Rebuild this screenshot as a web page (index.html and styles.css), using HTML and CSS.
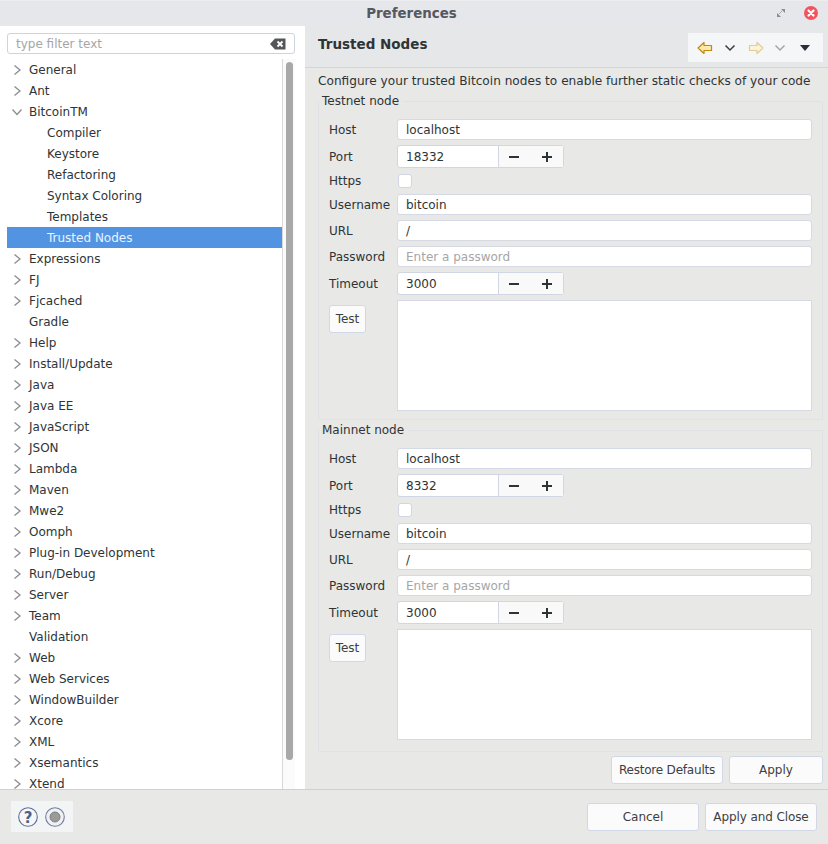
FILE: index.html
```html
<!DOCTYPE html>
<html lang="en">
<head>
<meta charset="utf-8">
<title>Preferences</title>
<link rel="stylesheet" href="styles.css">
</head>
<body>
<div class="window">
  <header class="titlebar">
    <span class="title">Preferences</span>
    <span class="wm-restore">
      <svg width="8" height="8" viewBox="0 0 8 8"><path d="M4 0h4v4z M0 4l4 4H0z" fill="#8c8c90"/><path d="M5 2L2 5" stroke="#a8a8ac"/></svg>
    </span>
    <span class="wm-close">
      <svg width="14" height="14" viewBox="0 0 14 14"><path d="M4.500 4.500l5 5M9.500 4.500l-5 5" stroke="#fff" stroke-width="2.200" stroke-linecap="round"/></svg>
    </span>
  </header>
  <div class="main">
    <aside class="left">
      <div class="filter">
        <span class="filter-ph">type filter text</span>
        <svg class="filter-clear" width="16" height="12" viewBox="0 0 16 12"><path d="M0 6l5-5.500h10.500v11H5z" fill="#55565a"/><path d="M7.500 3.500l5 5M12.500 3.500l-5 5" stroke="#fff" stroke-width="1.800"/></svg>
      </div>
      <div class="tree-wrap">
        <ul class="tree" id="tree">
          <li class="row"><svg class="chev" viewBox="0 0 10 10"><path d="M2.500 .5l5.500 4.500-5.500 4.500"/></svg>General</li>
          <li class="row"><svg class="chev" viewBox="0 0 10 10"><path d="M2.500 .5l5.500 4.500-5.500 4.500"/></svg>Ant</li>
          <li class="row"><svg class="chev" viewBox="0 0 10 10"><path d="M.5 2.500l4.500 5 4.500-5"/></svg>BitcoinTM</li>
          <li class="row child">Compiler</li>
          <li class="row child">Keystore</li>
          <li class="row child">Refactoring</li>
          <li class="row child">Syntax Coloring</li>
          <li class="row child">Templates</li>
          <li class="row child selected">Trusted Nodes</li>
          <li class="row"><svg class="chev" viewBox="0 0 10 10"><path d="M2.500 .5l5.500 4.500-5.500 4.500"/></svg>Expressions</li>
          <li class="row"><svg class="chev" viewBox="0 0 10 10"><path d="M2.500 .5l5.500 4.500-5.500 4.500"/></svg>FJ</li>
          <li class="row"><svg class="chev" viewBox="0 0 10 10"><path d="M2.500 .5l5.500 4.500-5.500 4.500"/></svg>Fjcached</li>
          <li class="row leaf">Gradle</li>
          <li class="row"><svg class="chev" viewBox="0 0 10 10"><path d="M2.500 .5l5.500 4.500-5.500 4.500"/></svg>Help</li>
          <li class="row"><svg class="chev" viewBox="0 0 10 10"><path d="M2.500 .5l5.500 4.500-5.500 4.500"/></svg>Install/Update</li>
          <li class="row"><svg class="chev" viewBox="0 0 10 10"><path d="M2.500 .5l5.500 4.500-5.500 4.500"/></svg>Java</li>
          <li class="row"><svg class="chev" viewBox="0 0 10 10"><path d="M2.500 .5l5.500 4.500-5.500 4.500"/></svg>Java EE</li>
          <li class="row"><svg class="chev" viewBox="0 0 10 10"><path d="M2.500 .5l5.500 4.500-5.500 4.500"/></svg>JavaScript</li>
          <li class="row"><svg class="chev" viewBox="0 0 10 10"><path d="M2.500 .5l5.500 4.500-5.500 4.500"/></svg>JSON</li>
          <li class="row"><svg class="chev" viewBox="0 0 10 10"><path d="M2.500 .5l5.500 4.500-5.500 4.500"/></svg>Lambda</li>
          <li class="row"><svg class="chev" viewBox="0 0 10 10"><path d="M2.500 .5l5.500 4.500-5.500 4.500"/></svg>Maven</li>
          <li class="row"><svg class="chev" viewBox="0 0 10 10"><path d="M2.500 .5l5.500 4.500-5.500 4.500"/></svg>Mwe2</li>
          <li class="row"><svg class="chev" viewBox="0 0 10 10"><path d="M2.500 .5l5.500 4.500-5.500 4.500"/></svg>Oomph</li>
          <li class="row"><svg class="chev" viewBox="0 0 10 10"><path d="M2.500 .5l5.500 4.500-5.500 4.500"/></svg>Plug-in Development</li>
          <li class="row"><svg class="chev" viewBox="0 0 10 10"><path d="M2.500 .5l5.500 4.500-5.500 4.500"/></svg>Run/Debug</li>
          <li class="row"><svg class="chev" viewBox="0 0 10 10"><path d="M2.500 .5l5.500 4.500-5.500 4.500"/></svg>Server</li>
          <li class="row"><svg class="chev" viewBox="0 0 10 10"><path d="M2.500 .5l5.500 4.500-5.500 4.500"/></svg>Team</li>
          <li class="row leaf">Validation</li>
          <li class="row"><svg class="chev" viewBox="0 0 10 10"><path d="M2.500 .5l5.500 4.500-5.500 4.500"/></svg>Web</li>
          <li class="row"><svg class="chev" viewBox="0 0 10 10"><path d="M2.500 .5l5.500 4.500-5.500 4.500"/></svg>Web Services</li>
          <li class="row"><svg class="chev" viewBox="0 0 10 10"><path d="M2.500 .5l5.500 4.500-5.500 4.500"/></svg>WindowBuilder</li>
          <li class="row"><svg class="chev" viewBox="0 0 10 10"><path d="M2.500 .5l5.500 4.500-5.500 4.500"/></svg>Xcore</li>
          <li class="row"><svg class="chev" viewBox="0 0 10 10"><path d="M2.500 .5l5.500 4.500-5.500 4.500"/></svg>XML</li>
          <li class="row"><svg class="chev" viewBox="0 0 10 10"><path d="M2.500 .5l5.500 4.500-5.500 4.500"/></svg>Xsemantics</li>
          <li class="row"><svg class="chev" viewBox="0 0 10 10"><path d="M2.500 .5l5.500 4.500-5.500 4.500"/></svg>Xtend</li>
        </ul>
        <div class="scroll"><div class="thumb"></div></div>
      </div>
    </aside>
    <section class="right">
      <div class="page-head">
        <h1 class="page-title">Trusted Nodes</h1>
        <div class="toolbar">
          <svg class="tb-arrow" width="16" height="14" viewBox="0 0 16 14"><path d="M1 7l6-5.500V4.500h7.500v5H7v3z" fill="#fde9a8" stroke="#c08a10" stroke-width="1.200" stroke-linejoin="round"/></svg>
          <svg class="tb-chev" width="12" height="8" viewBox="0 0 12 8"><path d="M1.500 1.500L6 6l4.500-4.500" fill="none" stroke="#3a3c42" stroke-width="1.500"/></svg>
          <svg class="tb-arrow fwd" width="16" height="14" viewBox="0 0 16 14"><path d="M15 7L9 1.500V4.500H1.500v5H9v3z" fill="#fdf3d6" stroke="#e0cc98" stroke-width="1.200" stroke-linejoin="round"/></svg>
          <svg class="tb-chev dim" width="12" height="8" viewBox="0 0 12 8"><path d="M1.500 1.500L6 6l4.500-4.500" fill="none" stroke="#a4a5a8" stroke-width="1.500"/></svg>
          <svg class="tb-menu" width="10" height="6" viewBox="0 0 10 6"><path d="M0 0h10L5 6z" fill="#2d2b3d"/></svg>
        </div>
      </div>
      <div class="page-body">
        <p class="desc">Configure your trusted Bitcoin nodes to enable further static checks of your code</p>
        <fieldset class="group">
          <legend class="legend">Testnet node</legend>
          <div class="form">
            <label class="lbl">Host</label><div class="input">localhost</div>
            <label class="lbl">Port</label><div class="spin"><span class="spin-val">18332</span><span class="spin-btns"><svg width="12" height="12" viewBox="0 0 12 12"><path d="M1 6h10" stroke="#2e3436" stroke-width="2"/></svg><svg width="12" height="12" viewBox="0 0 12 12"><path d="M1 6h10M6 1v10" stroke="#2e3436" stroke-width="2"/></svg></span></div>
            <label class="lbl">Https</label><div class="check-cell"><span class="check"></span></div>
            <label class="lbl">Username</label><div class="input">bitcoin</div>
            <label class="lbl">URL</label><div class="input">/</div>
            <label class="lbl">Password</label><div class="input ph">Enter a password</div>
            <label class="lbl">Timeout</label><div class="spin"><span class="spin-val">3000</span><span class="spin-btns"><svg width="12" height="12" viewBox="0 0 12 12"><path d="M1 6h10" stroke="#2e3436" stroke-width="2"/></svg><svg width="12" height="12" viewBox="0 0 12 12"><path d="M1 6h10M6 1v10" stroke="#2e3436" stroke-width="2"/></svg></span></div>
            <div class="test-cell"><button class="btn test">Test</button></div><div class="output"></div>
          </div>
        </fieldset>
        <fieldset class="group second">
          <legend class="legend">Mainnet node</legend>
          <div class="form">
            <label class="lbl">Host</label><div class="input">localhost</div>
            <label class="lbl">Port</label><div class="spin"><span class="spin-val">8332</span><span class="spin-btns"><svg width="12" height="12" viewBox="0 0 12 12"><path d="M1 6h10" stroke="#2e3436" stroke-width="2"/></svg><svg width="12" height="12" viewBox="0 0 12 12"><path d="M1 6h10M6 1v10" stroke="#2e3436" stroke-width="2"/></svg></span></div>
            <label class="lbl">Https</label><div class="check-cell"><span class="check"></span></div>
            <label class="lbl">Username</label><div class="input">bitcoin</div>
            <label class="lbl">URL</label><div class="input">/</div>
            <label class="lbl">Password</label><div class="input ph">Enter a password</div>
            <label class="lbl">Timeout</label><div class="spin"><span class="spin-val">3000</span><span class="spin-btns"><svg width="12" height="12" viewBox="0 0 12 12"><path d="M1 6h10" stroke="#2e3436" stroke-width="2"/></svg><svg width="12" height="12" viewBox="0 0 12 12"><path d="M1 6h10M6 1v10" stroke="#2e3436" stroke-width="2"/></svg></span></div>
            <div class="test-cell"><button class="btn test">Test</button></div><div class="output"></div>
          </div>
        </fieldset>
        <div class="page-actions">
          <button class="btn restore">Restore Defaults</button>
          <button class="btn apply">Apply</button>
        </div>
      </div>
    </section>
  </div>
  <footer class="footer">
    <div class="foot-icons">
      <svg width="20" height="20" viewBox="0 0 20 20"><circle cx="10" cy="10" r="9.300" fill="#f6f7f9" stroke="#5d6f92" stroke-width="1.100"/><text x="10" y="15.500" class="help-mark">?</text></svg>
      <svg width="20" height="20" viewBox="0 0 20 20"><circle cx="10" cy="10" r="9.300" fill="#f0f1f3" stroke="#6e7f9c" stroke-width="1.100"/><circle cx="10" cy="10" r="5" fill="#9a9a9a" stroke="#7f7f7f"/></svg>
    </div>
    <div class="foot-btns">
      <button class="btn cancel">Cancel</button>
      <button class="btn close">Apply and Close</button>
    </div>
  </footer>
</div>
</body>
</html>
```

FILE: styles.css
```css
* { box-sizing: border-box; }
html, body { margin: 0; padding: 0; }
body {
  font-family: "DejaVu Sans", sans-serif;
  font-size: 12px;
  color: #2e3436;
  background: #e8e8e7;
}
.window { width: 828px; height: 844px; display: flex; flex-direction: column; overflow: hidden; }

.titlebar {
  height: 26px; flex: none; background: #e6e7ea; border-top: 1px solid #eeeef0;
  display: flex; align-items: center;
}
.title { flex: 1; text-align: center; font-weight: bold; font-size: 13.400px; color: #55585e; padding-left: 46px; }
.wm-restore { width: 8px; height: 8px; display: flex; margin-right: 19px; margin-top: -1px; }
.wm-close {
  width: 14px; height: 14px; border-radius: 50%; background: #f2545f; display: flex; margin-right: 10px; margin-top: -1px;
}

.main { flex: 1; min-height: 0; display: flex; }
.left { width: 305px; flex: none; background: #fff; padding: 7px 10px 0 7px; display: flex; flex-direction: column; }
.filter {
  height: 21px; flex: none; border: 1px solid #cdd3e0; border-radius: 3px; background: #fff;
  display: flex; align-items: center; justify-content: space-between; padding: 0 8px 0 8px;
}
.filter-ph { color: #a6a6a6; }
.tree-wrap { flex: 1; min-height: 0; margin-top: 5px; display: flex; overflow: hidden; }
.tree { list-style: none; margin: 0; padding: 0; width: 275px; flex: none; }
.row { height: 21px; padding: 1px 0 0 5px; display: flex; align-items: center; white-space: nowrap; }
.chev { width: 10px; height: 10px; margin: -1px 7px 0 0; fill: none; stroke: #8a8c90; stroke-width: 1.300; flex: none; }
.child { padding-left: 40px; }
.leaf { padding-left: 22px; }
.selected { background: #5294e2; color: #eaf3ff; }
.scroll { flex: 1; border-left: 1px solid #d8d8d8; background: #fbfbfb; padding: 3px 0 0 3px; }
.thumb { width: 7px; height: 698px; border-radius: 4px; background: #a8a8a8; }

.right { flex: 1; min-width: 0; display: flex; flex-direction: column; }
.page-head {
  height: 42px; flex: none; border-bottom: 1px solid #d4d4d4; background: #e6e7e9;
  display: flex; justify-content: space-between; padding: 7px 5px 0 13px;
}
.page-title { margin: 3px 0 0; font-size: 13.500px; font-weight: bold; line-height: 16px; color: #2e3436; }
.toolbar {
  width: 135px; height: 29px; background: #f5f6f8; display: flex; align-items: center; padding-left: 9px;
}
.tb-arrow { margin-right: 11px; }
.tb-chev { margin-right: 12px; }
.tb-chev.dim { margin-right: 14px; }
.tb-arrow.fwd { margin-right: 10px; }
.page-body { flex: 1; padding: 5px 5px 0 13px; display: flex; flex-direction: column; }
.desc { margin: 0; line-height: 16px; height: 16px; font-size: 12.130px; white-space: nowrap; }

.group {
  margin: 4px 0 0; padding: 10px 10px 8px 10px; border: 1px solid #dfe1e5; min-width: 0; height: 327px;
}
.group.second { margin-top: 2px; height: 330px; }
.legend { padding: 0 4px 0 3px; margin-left: -10px; line-height: 16px; }

.form { display: grid; grid-template-columns: 68px 415px; row-gap: 5px; grid-auto-rows: auto; }
.lbl { display: flex; align-items: center; }
.input {
  height: 21px; border: 1px solid #d5d9e4; border-radius: 3px; background: #fff; padding: 1px 8px 0; line-height: 19px;
}
.input.ph { color: #a6a6a6; }
.spin {
  height: 23px; width: 167px; border: 1px solid #d0d6e4; border-radius: 3px; background: #fff; display: flex; line-height: 23px;
}
.spin-val { width: 101px; padding-left: 8px; border-right: 1px solid #d0d6e4; }
.spin-btns { flex: 1; display: flex; align-items: center; justify-content: space-between; padding: 0 10px 0 9px; background: #f9f9f9; }
.check-cell { height: 16px; display: flex; align-items: center; padding-left: 1px; }
.check { width: 14px; height: 14px; border: 1px solid #d0d6e4; border-radius: 3px; background: #fff; }
.test-cell { padding-top: 5px; }
.output { height: 111px; border: 1px solid #d5d9e4; background: #fff; }

.btn {
  font: inherit; color: #3c4043; height: 28px; border: 1px solid #d0d8e8; border-radius: 3px; background: #fbfbfb; padding: 0;
}
.test { width: 37px; height: 28px; }
.page-actions { display: flex; justify-content: flex-end; gap: 6px; margin-top: 4px; }
.restore { width: 112px; letter-spacing: -0.200px; }
.apply { width: 94px; }

.footer {
  height: 55px; flex: none; border-top: 1px solid #d0d0ce; background: #e8e8e7;
  display: flex; justify-content: space-between; padding: 11px 11px 0 11px;
}
.foot-icons {
  width: 62px; height: 31px; background: #f3f4f6; display: flex; align-items: center; justify-content: space-between; padding: 0 8px 0 7px;
}
.help-mark { font-family: "DejaVu Sans", sans-serif; font-weight: bold; font-size: 15px; fill: #4e6088; text-anchor: middle; }
.foot-btns { display: flex; gap: 6px; padding-top: 2px; }
.cancel, .close { width: 112px; }
.close { letter-spacing: -0.100px; }
```
